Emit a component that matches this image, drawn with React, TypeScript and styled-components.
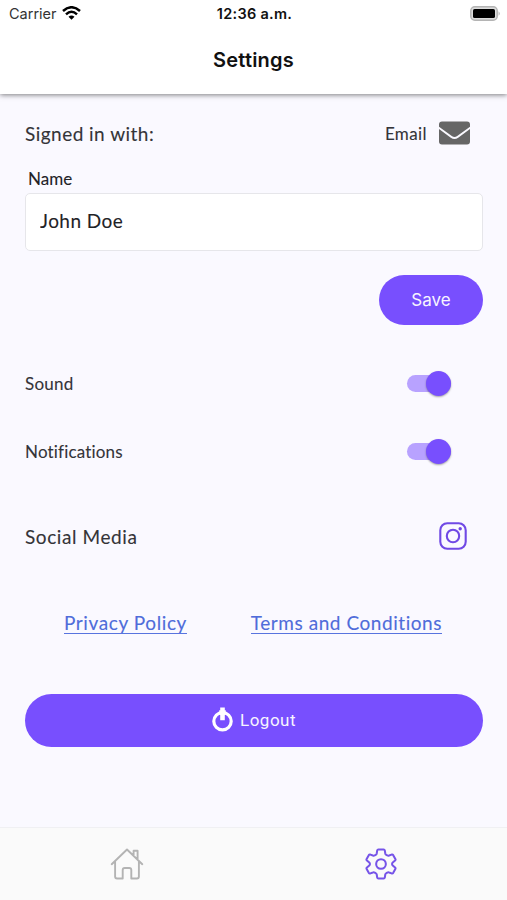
import React from "react";
import styled, { createGlobalStyle } from "styled-components";

const PURPLE = "#784ffe";

const GlobalStyle = createGlobalStyle`
  *, *::before, *::after { box-sizing: border-box; }
  body { margin: 0; background: #faf9ff; }
  button, input { font: inherit; }
`;

const Screen = styled.div`
  display: flex;
  flex-direction: column;
  height: 900px;
  overflow: hidden;
  background: #faf9ff;
  color: #343438;
  font-family: Lato, "Open Sans", sans-serif;
  font-variant-ligatures: none;
`;

const Header = styled.header`
  height: 94px;
  flex: none;
  background: #fff;
  box-shadow: 0 1px 5px rgba(0, 0, 0, 0.5);
  color: #111;
  font-family: Inter, sans-serif;
`;

const StatusBar = styled.div`
  display: grid;
  grid-template-columns: 1fr auto 1fr;
  align-items: center;
  height: 27px;
  padding: 0 6px 0 9px;
  font-size: 14.5px;
`;

const Carrier = styled.div`
  display: flex;
  align-items: center;
  gap: 5px;
  color: #333;
  svg { margin-top: -2px; }
`;

const Clock = styled.div`
  margin-left: -1px;
  font-weight: 600;
  letter-spacing: 0.3px;
`;

const Battery = styled.div`
  display: flex;
  justify-content: flex-end;
`;

const Title = styled.h1`
  margin: 0;
  line-height: 66px;
  text-align: center;
  font-size: 20px;
  font-weight: 600;
  letter-spacing: 0.2px;
`;

const Content = styled.main`
  flex: 1;
  padding: 19px 24px 0 25px;
`;

const Row = styled.div<{ $height: number; $top?: number; $right?: number }>`
  display: flex;
  align-items: center;
  justify-content: space-between;
  height: ${(p) => p.$height}px;
  margin-top: ${(p) => p.$top ?? 0}px;
  padding-right: ${(p) => p.$right ?? 0}px;
`;

const Label = styled.span<{ $size: number; $spacing?: number }>`
  padding-top: 1px;
  font-size: ${(p) => p.$size}px;
  line-height: 24px;
  font-weight: 400;
  letter-spacing: ${(p) => p.$spacing ?? 0}px;
  white-space: nowrap;
  -webkit-text-stroke: 0.1px currentColor;
`;

const Provider = styled.div`
  display: flex;
  align-items: center;
  gap: 12px;
`;

const FieldLabel = styled.label`
  display: block;
  height: 24px;
  margin: 14px 0 2px 3px;
  color: #222226;
`;

const Field = styled.input`
  display: block;
  width: 100%;
  height: 58px;
  padding: 0 14px 4px;
  border: 1px solid #e6e6ea;
  border-radius: 5px;
  outline: none;
  background: #fff;
  color: #222226;
  font-size: 19px;
  letter-spacing: 0.45px;
  -webkit-text-stroke: 0.1px currentColor;
`;

const Actions = styled.div`
  display: flex;
  justify-content: flex-end;
  margin-top: 24px;
`;

const Button = styled.button<{ $wide?: boolean }>`
  display: flex;
  align-items: center;
  justify-content: center;
  gap: 7px;
  width: ${(p) => (p.$wide ? "100%" : "104px")};
  height: ${(p) => (p.$wide ? 53 : 50)}px;
  margin-top: ${(p) => (p.$wide ? 60 : 0)}px;
  padding: ${(p) => (p.$wide ? "0 0 2px" : "0")};
  border: 0;
  border-radius: 27px;
  background: ${PURPLE};
  color: #f7f4ff;
  font-family: ${(p) => (p.$wide ? "Roboto" : "Inter")}, sans-serif;
  font-size: 17px;
  letter-spacing: ${(p) => (p.$wide ? 0.5 : 0)}px;
`;

const Track = styled.button`
  display: flex;
  align-items: center;
  justify-content: flex-end;
  width: 44px;
  height: 17px;
  padding: 0;
  border: 0;
  border-radius: 9px;
  background: #b8a2ff;
`;

const Thumb = styled.span`
  flex: none;
  width: 25px;
  height: 25px;
  border-radius: 50%;
  background: ${PURPLE};
  box-shadow: 0 1px 2px rgba(0, 0, 0, 0.35);
`;

const Links = styled.div`
  display: flex;
  justify-content: space-between;
  margin-top: 54px;
  padding: 0 41px 0 39px;
`;

const PolicyLink = styled.a<{ $spacing: number }>`
  height: 24px;
  border-bottom: 1px solid #5874df;
  color: #4f6cda;
  font-size: 19px;
  line-height: 26px;
  letter-spacing: ${(p) => p.$spacing}px;
  text-decoration: none;
  -webkit-text-stroke: 0.1px currentColor;
`;

const TabBar = styled.nav`
  display: grid;
  grid-template-columns: 1fr 1fr;
  flex: none;
  height: 73px;
  border-top: 1px solid #f0f0f3;
  background: #fafafa;
`;

const Tab = styled.a`
  display: flex;
  align-items: center;
  justify-content: center;
  padding: 0 0 1px 1px;
`;

const WifiIcon = () => (
  <svg width="19" height="14" viewBox="0 0 19 14" fill="none" stroke="#000" strokeWidth="2.5">
    <path d="M1 5Q9.5-2.5 18 5M4 8.3Q9.5 3.2 15 8.3" />
    <path d="M6.5 10.8Q9.5 8 12.5 10.8L9.5 13.8Z" fill="#000" stroke="none" />
  </svg>
);

const BatteryIcon = () => (
  <svg width="31" height="15" viewBox="0 0 31 15">
    <rect x=".8" y=".8" width="26.4" height="13.4" rx="4" fill="#ddd" stroke="#b4b4b4" strokeWidth="1.5" />
    <rect x="3" y="3" width="22" height="9" rx="1.6" fill="#000" />
    <path d="M28.6 5.2q2.2 2.3 0 4.6z" fill="#aaa" />
  </svg>
);

const MailIcon = () => (
  <svg width="31" height="24" viewBox="0 0 31 24" fill="#666">
    <path d="M3 .5h25a3 3 0 0 1 3 3v2.2L18.2 15.1q-2.7 2-5.4 0L0 5.7V3.5a3 3 0 0 1 3-3Z" />
    <path d="M0 8.1l11.8 8.7q3.7 2.6 7.4 0L31 8.1v12.4a3 3 0 0 1-3 3H3a3 3 0 0 1-3-3Z" />
  </svg>
);

const InstagramIcon = () => (
  <svg width="28" height="28" viewBox="0 0 28 28" fill="none" stroke="#7049e5" strokeWidth="2.1">
    <rect x="1.3" y="1.3" width="25.4" height="25.4" rx="7" />
    <circle cx="14" cy="14" r="6.2" />
    <circle cx="21.2" cy="6.8" r="1.7" fill="#7049e5" stroke="none" />
  </svg>
);

const PowerIcon = () => (
  <svg width="21" height="25" viewBox="0 0 21 25" fill="none">
    <circle cx="10.5" cy="14.2" r="8.7" stroke="#fff" strokeWidth="3.2" />
    <path d="M10.5 8v5.4" stroke={PURPLE} strokeWidth="6.6" />
    <path d="M10.5 .6v12.6M7.2 5.6h6.6" stroke="#fff" strokeWidth="4.6" />
  </svg>
);

const HomeIcon = () => (
  <svg width="34" height="32" viewBox="0 0 34 32" fill="none" stroke="#b3b3b3" strokeWidth="1.9" strokeLinejoin="round" strokeLinecap="round">
    <path d="M1.7 16.2 17 1.5l15.3 14.7M5.1 13.3v15.2q0 2 2 2h5.6V22q0-2 2-2h4.6q2 0 2 2v8.5h5.6q2 0 2-2V13.3M23.6 7.1V2.7h4v8.1" />
  </svg>
);

const GearIcon = () => (
  <svg width="32" height="32" viewBox="-.5 -.5 33 33" fill="none" stroke="#7654e8" strokeWidth="2.1" strokeLinejoin="round">
    <path d="M13.3 1h5.4q1 0 1.2 1l.5 3.1q.2 1 1.1 1.5l1 .6q.9.5 1.8.1l2.7-1q1-.3 1.6.6l2.2 3.9q.5.9-.3 1.6l-2.4 2q-.7.6-.7 1.6t.7 1.6l2.4 2q.8.7.3 1.6l-2.2 3.9q-.6.9-1.6.6l-2.7-1q-.9-.4-1.8.1l-1 .6q-.9.5-1.1 1.5l-.5 3.1q-.2 1-1.2 1h-5.4q-1 0-1.2-1l-.5-3.1q-.2-1-1.1-1.5l-1-.6q-.9-.5-1.8-.1l-2.7 1q-1 .3-1.6-.6l-2.2-3.9q-.5-.9.3-1.6l2.4-2q.7-.6.7-1.6t-.7-1.6l-2.4-2q-.8-.7-.3-1.6l2.2-3.9q.6-.9 1.6-.6l2.7 1q.9.4 1.8-.1l1-.6q.9-.5 1.1-1.5l.5-3.1q.2-1 1.2-1Z" />
    <circle cx="16" cy="16" r="5" />
  </svg>
);

const Toggle = ({ name }: { name: string }) => (
  <Track role="switch" aria-checked="true" aria-label={name}>
    <Thumb />
  </Track>
);

export default function App() {
  return (
    <Screen>
      <GlobalStyle />
      <Header>
        <StatusBar>
          <Carrier>Carrier <WifiIcon /></Carrier>
          <Clock>12:36 a.m.</Clock>
          <Battery><BatteryIcon /></Battery>
        </StatusBar>
        <Title>Settings</Title>
      </Header>
      <Content>
        <Row $height={40} $right={13}>
          <Label $size={19} $spacing={0.47}>Signed in with:</Label>
          <Provider>
            <Label $size={17} $spacing={0.4}>Email</Label>
            <MailIcon />
          </Provider>
        </Row>
        <FieldLabel htmlFor="name"><Label $size={17}>Name</Label></FieldLabel>
        <Field id="name" defaultValue="John Doe" />
        <Actions><Button>Save</Button></Actions>
        <Row $height={40} $top={38} $right={32}>
          <Label $size={17} $spacing={0.25}>Sound</Label>
          <Toggle name="Sound" />
        </Row>
        <Row $height={40} $top={28} $right={32}>
          <Label $size={17} $spacing={0.17}>Notifications</Label>
          <Toggle name="Notifications" />
        </Row>
        <Row $height={40} $top={45} $right={16}>
          <Label $size={19} $spacing={0.58}>Social Media</Label>
          <InstagramIcon />
        </Row>
        <Links>
          <PolicyLink $spacing={0.6}>Privacy Policy</PolicyLink>
          <PolicyLink $spacing={0.55}>Terms and Conditions</PolicyLink>
        </Links>
        <Button $wide><PowerIcon />Logout</Button>
      </Content>
      <TabBar>
        <Tab aria-label="Home"><HomeIcon /></Tab>
        <Tab aria-label="Settings"><GearIcon /></Tab>
      </TabBar>
    </Screen>
  );
}
